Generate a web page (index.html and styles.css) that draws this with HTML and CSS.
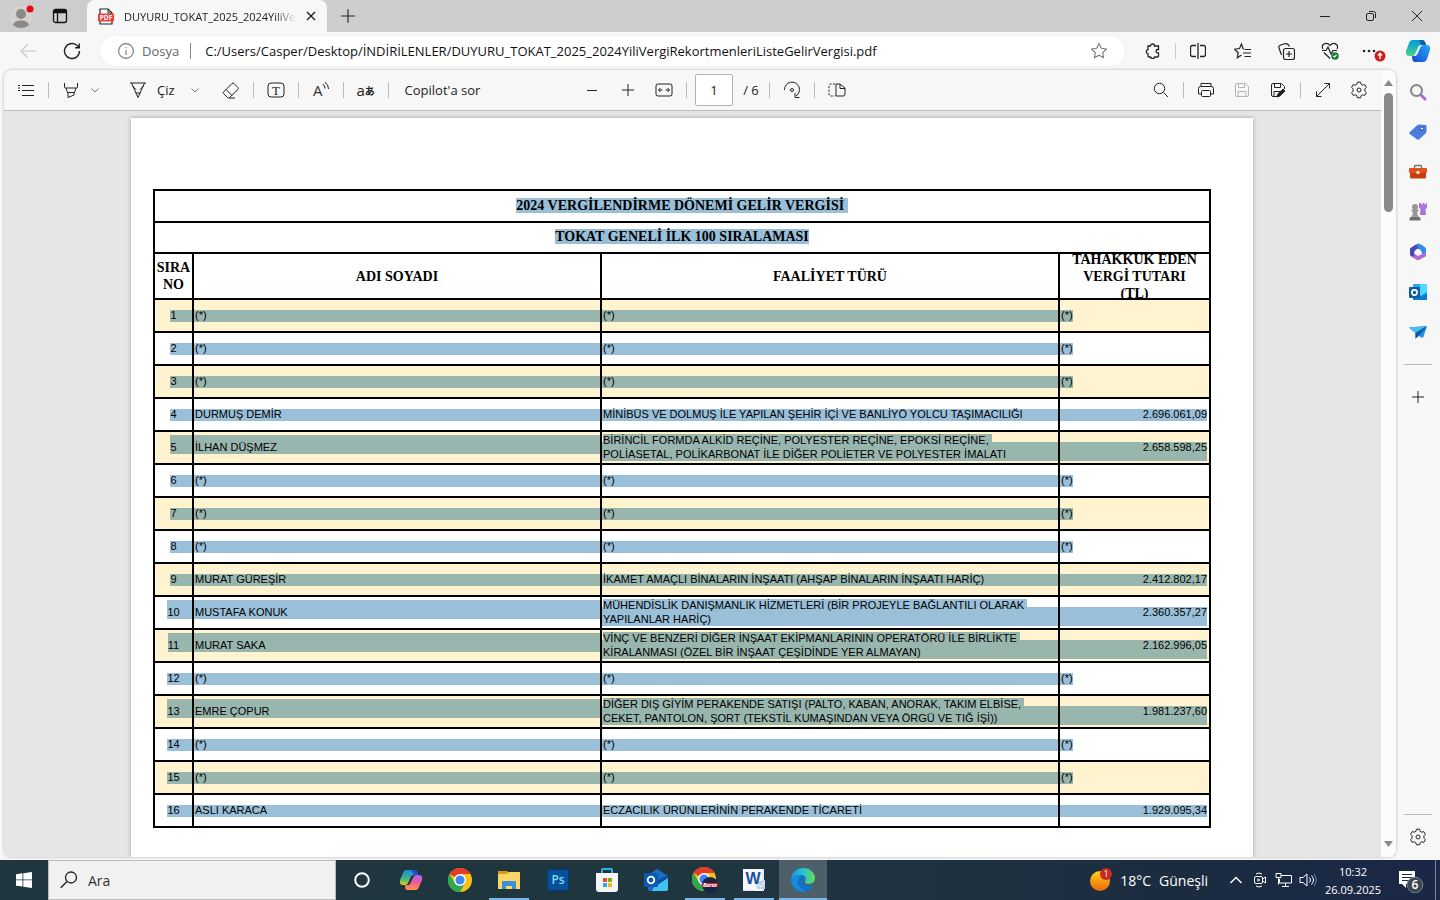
FILE: index.html
```html
<!DOCTYPE html>
<html lang="tr">
<head>
    <meta charset="UTF-8">
    <meta name="viewport" content="width=device-width, initial-scale=1.0">
    <title>DUYURU_TOKAT_2025_2024YiliVergiRekortmenleriListeGelirVergisi.pdf</title>
    <link rel="stylesheet" href="styles.css">
</head>
<body>
    <svg class="defs" aria-hidden="true">
        <symbol id="gear" viewBox="0 0 18 18">
            <path d="M7.4 1.2h3.2l.5 2.1 1.6.9 2.1-.6 1.6 2.7-1.5 1.6v2.2l1.5 1.6-1.6 2.7-2.1-.6-1.6.9-.5 2.1H7.4l-.5-2.1-1.6-.9-2.1.6-1.6-2.7 1.5-1.6V7.9L1.6 6.3l1.6-2.7 2.1.6 1.6-.9z" stroke-linejoin="round"/>
            <circle cx="9" cy="9" r="2"/>
        </symbol>
        <symbol id="chevron" viewBox="0 0 10 10"><path d="M1.5 3.5 5 7l3.5-3.5"/></symbol>
        <symbol id="plus" viewBox="0 0 14 14"><path d="M7 1v12M1 7h12"/></symbol>
        <symbol id="chrome" viewBox="0 0 24 24">
            <circle cx="12" cy="12" r="12" fill="#fbc116"/>
            <path d="M12 12 1.6 6A12 12 0 0 1 22.4 6H12z" fill="#e33b2e"/>
            <path d="M1.6 6A12 12 0 0 0 12 24l5.2-9L12 12 6.8 15z" fill="#2da94f"/>
            <circle cx="12" cy="12" r="6" fill="#fff"/>
            <circle cx="12" cy="12" r="4.6" fill="#4285f4"/>
        </symbol>
    </svg>

    <header class="tabstrip">
        <button class="tab-btn" aria-label="Profil">
            <svg width="26" height="26" viewBox="0 0 26 26"><circle cx="12" cy="14" r="10" fill="#d3d0cc" stroke="#dedbd6"/><circle cx="12" cy="11" r="5" fill="#8d8984"/><path d="M4 22c1-6 15-6 16 0-4 4-12 4-16 0z" fill="#8d8984"/><circle cx="21" cy="6" r="3.5" fill="#e40b15"/></svg>
        </button>
        <button class="tab-btn" aria-label="Sekme eylemleri">
            <svg width="16" height="16" viewBox="0 0 16 16" fill="none" stroke="#111" stroke-width="1.3"><rect x="1.5" y="1.5" width="13" height="13" rx="2"/><path d="M1.5 3.5h13" stroke-width="3.5"/><path d="M5.5 4v10"/></svg>
        </button>
        <div class="tab">
            <svg width="16" height="17" viewBox="0 0 16 17"><path d="M2 1h8l4 4v11H2z" fill="#fff" stroke="#222" stroke-width="1.2"/><path d="M10 1v4h4" fill="none" stroke="#222"/><rect y="5.500" width="16" height="8" rx="1" fill="#f13d3d"/><text x="8" y="12" text-anchor="middle" font-size="6.500" font-weight="700" fill="#fff">PDF</text></svg>
            <span class="tab-title">DUYURU_TOKAT_2025_2024YiliVe</span>
            <button aria-label="Sekmeyi kapat"><svg width="10" height="10" viewBox="0 0 10 10" stroke="#222" stroke-width="1.4"><path d="m1 1 8 8M9 1 1 9"/></svg></button>
        </div>
        <button class="tab-btn" aria-label="Yeni sekme"><svg class="line" width="16" height="16"><use href="#plus"/></svg></button>
        <div class="window-controls">
            <button aria-label="Küçült"><svg class="line" width="12" height="12" viewBox="0 0 12 12"><path d="M1 6.500h10"/></svg></button>
            <button aria-label="Geri yükle"><svg class="line" width="12" height="12" viewBox="0 0 12 12"><rect x="1.500" y="3.500" width="7" height="7" rx="1.500"/><path d="M4 1.500h4.500a2 2 0 0 1 2 2V8"/></svg></button>
            <button aria-label="Kapat"><svg class="line" width="12" height="12" viewBox="0 0 12 12"><path d="m1 1 10 10M11 1 1 11"/></svg></button>
        </div>
    </header>

    <nav class="addressbar">
        <button aria-label="Geri"><svg width="18" height="16" viewBox="0 0 18 16" fill="none" stroke="#c6c6c6" stroke-width="1.200"><path d="M17 8H2M8.500 1.500 2 8l6.500 6.500"/></svg></button>
        <button aria-label="Yenile"><svg class="line" width="18" height="18" viewBox="0 0 18 18" stroke-width="1.400"><path d="M16.500 9A7.500 7.500 0 1 1 13.500 3L16 5.500M16.300 1.500v4.200h-4.200"/></svg></button>
        <div class="pill">
            <svg width="16" height="16" viewBox="0 0 16 16" fill="none" stroke="#777" stroke-width="1.100"><circle cx="8" cy="8" r="7.400"/><path d="M8 7v5M8 4v1.300"/></svg>
            <label for="url">Dosya</label>
            <span class="pill-line"></span>
            <input id="url" type="text" value="C:/Users/Casper/Desktop/İNDİRİLENLER/DUYURU_TOKAT_2025_2024YiliVergiRekortmenleriListeGelirVergisi.pdf">
            <button aria-label="Sık kullanılanlara ekle"><svg width="18" height="18" viewBox="0 0 18 18" fill="none" stroke="#777" stroke-width="1.100" stroke-linejoin="round"><path d="m9 1.500 2.300 4.800 5.200.7-3.800 3.600.9 5.200L9 13.300l-4.600 2.500.9-5.200L1.500 7l5.200-.7z"/></svg></button>
        </div>
        <button aria-label="Uzantılar"><svg class="line" width="16" height="16" viewBox="0 0 16 16" stroke-width="1.300"><path d="M3 3h2.500a2 2 0 0 1 4 0h4v3.500h-.8a1.600 1.600 0 0 0 0 3.300h.8V13q0 1-1 1H9.800a2.200 2.200 0 0 1-4.200 0H4q-1 0-1-1v-2.200a2.200 2.200 0 0 1 0-4.300z"/></svg></button>
        <span class="bar-line"></span>
        <button aria-label="Bölünmüş ekran"><svg class="line" width="16" height="16" viewBox="0 0 16 16" stroke-width="1.300"><path d="M6 2.500H2.500q-2 0-2 2v7q0 2 2 2H6M8 0v16M10 2.500h3.500q2 0 2 2v7q0 2-2 2H10"/></svg></button>
        <button aria-label="Sık kullanılanlar"><svg class="line" width="17" height="16" viewBox="0 0 17 16" stroke-width="1.200"><path d="M10 6 9 5.500 7.500 1 5.500 5.500l-5 .7 3.700 3.500-.9 5L7.500 12M10.500 6.500H17M9 10h8M10.500 13.500H17"/></svg></button>
        <button aria-label="Koleksiyonlar"><svg class="line" width="17" height="17" viewBox="0 0 17 17" stroke-width="1.200"><rect x="5.500" y="5.500" width="11" height="11" rx="2"/><path d="M11 8v6M8 11h6M3.500 12 1 5q-.7-2 1.200-2.700L6.500.8q2-.6 3.500.7l1.500 1.800"/></svg></button>
        <button aria-label="Tarayıcı temel parçaları"><svg class="line" width="18" height="18" viewBox="0 0 18 18" stroke-width="1.200"><path d="M2 7C-1 2 6-.5 9 3.500c3-4 9.500-1.500 7 3.500M1 8.500h4L7 5l3 7 2-3.500h4M3 10.500l6 6"/><circle cx="14" cy="14" r="3.800" fill="#188038" stroke="none"/><path d="m12.300 14 1.200 1 2-2.200" stroke="#fff"/></svg></button>
        <button aria-label="Ayarlar ve diğerleri"><svg width="24" height="22" viewBox="0 0 24 22"><g fill="#222"><circle cx="2" cy="11" r="1.300"/><circle cx="7" cy="11" r="1.300"/><circle cx="12" cy="11" r="1.300"/></g><circle cx="18" cy="16" r="5.500" fill="#c9211e"/><path d="M18 19v-5.500m-2 2 2-2.200 2 2.200" fill="none" stroke="#fff" stroke-width="1.300"/></svg></button>
        <button aria-label="Copilot">
            <svg width="24" height="24" viewBox="0 0 24 24">
                <defs><linearGradient id="cp1" x1="0" y1="0" x2="0" y2="1"><stop offset="0" stop-color="#0099dd"/><stop offset="1" stop-color="#49d58a"/></linearGradient><linearGradient id="cp2" x1="1" y1="0" x2="0" y2="1"><stop offset="0" stop-color="#27a9f5"/><stop offset="1" stop-color="#1648d8"/></linearGradient></defs>
                <path d="M7 1h9q3 0 4 5h-4q-2 0-3 3l-2 5q-1 3-4 3H3q-4 0-3-5l3-8q1-3 4-3z" fill="url(#cp1)"/>
                <path d="M13 1h3q3 0 4 5h-5z" fill="#0a5fa8"/>
                <path d="M17 23H9q-3 0-3-6h3q2 0 3-3l2-5q1-3 4-3h3q4 0 3 5l-3 9q-1 3-4 3z" fill="url(#cp2)"/>
                <path d="M13 6.500h4q-3 0-4 4l-2 4q-1 3-4 2.500 2-1 3-4z" fill="#f2fbff"/>
            </svg>
        </button>
    </nav>

    <div class="workspace">
        <section class="viewer">
            <div class="document">
                <div class="toolbar">
                    <div class="tools tools-left">
                        <button aria-label="İçindekiler"><svg class="line" width="18" height="14" viewBox="0 0 18 14"><path d="M1 2.500h2M5 2.500h12M1 7.500h2M5 7.500h12M5 12.500h12M1 5h2"/></svg></button>
                        <span class="sep"></span>
                        <div class="split">
                            <button aria-label="Vurgula"><svg class="line" width="16" height="17" viewBox="0 0 16 17"><path d="M1.500 1v4q0 1 1 1h11q1 0 1-1V1M3 6l1.500 4.500h7L13 6M5 10.500v5l6-2.500v-2.500"/></svg></button>
                            <button class="arrow" aria-label="Vurgu rengi"><svg class="line" width="10" height="10"><use href="#chevron"/></svg></button>
                        </div>
                        <div class="split draw">
                            <button class="wide"><svg class="line" width="18" height="16" viewBox="0 0 18 16"><path d="M1 1h16M2.500 1 9 15.500 15.500 1M3.500 4q2 1.500 3.500 3.500M14.500 4 11 7.500M6.500 11h5"/></svg>Çiz</button>
                            <button class="arrow" aria-label="Kalem seçenekleri"><svg class="line" width="10" height="10"><use href="#chevron"/></svg></button>
                        </div>
                        <button aria-label="Sil"><svg class="line" width="18" height="17" viewBox="0 0 18 17"><path d="m1.500 10 8.500-8.500q1-1 2 0l4 4q1 1 0 2L7.500 15.500q-1 .8-2 0l-4-4q-.7-.8 0-1.500zM4 7.500l6 6M7 16h6"/></svg></button>
                        <span class="sep"></span>
                        <button aria-label="Metin ekle"><svg class="line" width="18" height="16" viewBox="0 0 18 16"><rect x="1" y="1" width="16" height="14" rx="3"/><text x="9" y="12.500" text-anchor="middle" font-family="Liberation Serif" font-size="13" fill="#222" stroke="none">T</text></svg></button>
                        <span class="sep"></span>
                        <button aria-label="Sesli oku"><svg class="line" width="18" height="18" viewBox="0 0 18 18"><text x="1" y="15" font-size="15" fill="#333" stroke="none">A</text><path d="M11 3q2 2 2 4.500M13 1q3.500 3 3.500 7"/></svg></button>
                        <span class="sep"></span>
                        <button class="translate" aria-label="Çevir">a<small>あ</small></button>
                        <span class="sep"></span>
                        <button class="wide">Copilot'a sor</button>
                    </div>
                    <div class="tools">
                        <button aria-label="Uzaklaştır"><svg class="line" width="14" height="14" viewBox="0 0 14 14"><path d="M2 7.500h10"/></svg></button>
                        <button aria-label="Yakınlaştır"><svg class="line" width="14" height="14"><use href="#plus"/></svg></button>
                        <button aria-label="Genişliğe sığdır"><svg class="line" width="18" height="14" viewBox="0 0 18 14"><rect x="1" y="1" width="16" height="12" rx="2"/><path d="M3.500 7h4M14.500 7h-4M5.500 5l-2 2 2 2M12.500 5l2 2-2 2"/></svg></button>
                        <span class="sep"></span>
                        <input id="page" class="page-input" type="text" value="1">
                        <label class="page-count" for="page">/ 6</label>
                        <span class="sep"></span>
                        <button aria-label="Döndür"><svg class="line" width="18" height="18" viewBox="0 0 18 18"><path d="M1.500 9a7.500 7.500 0 1 1 11.500 6M12 12v4.500h4.500"/><circle cx="9" cy="9" r="1.500"/></svg></button>
                        <span class="sep"></span>
                        <button aria-label="Sayfa görünümü"><svg class="line" width="18" height="14" viewBox="0 0 18 14"><path d="M7 1H3Q1 1 1 3v8q0 2 2 2h4" stroke-dasharray="2 1.500"/><path d="M8 1h4l5 4v6q0 2-2 2H8zM12 1v4.500h5"/></svg></button>
                    </div>
                    <div class="tools tools-right">
                        <button aria-label="Bul"><svg class="line" width="16" height="16" viewBox="0 0 16 16"><circle cx="6.500" cy="6.500" r="5.200"/><path d="m10.500 10.500 4.500 4.500"/></svg></button>
                        <span class="sep"></span>
                        <button aria-label="Yazdır"><svg class="line" width="18" height="16" viewBox="0 0 18 16"><path d="M4 4.500V1.500h10v3M4.500 12H1.500V6.500q0-2 2-2h11q2 0 2 2V12h-3"/><rect x="4.500" y="8.500" width="9" height="6" rx="1"/></svg></button>
                        <button disabled aria-label="Kaydet"><svg width="16" height="16" viewBox="0 0 16 16" fill="none" stroke="#b5b5b5"><path d="M1.500 3q0-1.500 1.500-1.500h8.500l3 3V13q0 1.500-1.500 1.500H3q-1.500 0-1.500-1.500zM4.500 1.500v4h6v-4M4 14.500v-5h8v5"/></svg></button>
                        <button aria-label="Farklı kaydet"><svg class="line" width="16" height="16" viewBox="0 0 16 16"><path d="M7 14.500H3q-1.500 0-1.500-1.500V3q0-1.500 1.500-1.500h8.500l3 3V7M4.500 1.500v4h6v-4M4 14.500v-5h6"/><path d="m7 15 .8-3L13 7l2 2-5.200 5z" fill="#222"/></svg></button>
                        <span class="sep"></span>
                        <button aria-label="Tam ekran"><svg class="line" width="16" height="16" viewBox="0 0 16 16"><path d="M1.500 14.500 14.500 1.500M9.500 1.500h5v5M1.500 9.500v5h5"/></svg></button>
                        <button aria-label="PDF ayarları"><svg class="line" width="18" height="18"><use href="#gear"/></svg></button>
                    </div>
                </div>

                <main class="canvas">
                    <article class="page">
                        <table>
                            <colgroup><col class="c-no"><col class="c-name"><col><col class="c-amount"></colgroup>
                            <thead>
                                <tr class="title"><th colspan="4"><span>2024 VERGİLENDİRME DÖNEMİ GELİR VERGİSİ&nbsp;</span></th></tr>
                                <tr class="subtitle"><th colspan="4"><span>TOKAT GENELİ İLK 100 SIRALAMASI</span></th></tr>
                                <tr class="heads">
                                    <th scope="col"><div>SIRA NO</div></th>
                                    <th scope="col"><div>ADI SOYADI</div></th>
                                    <th scope="col"><div>FAALİYET TÜRÜ</div></th>
                                    <th scope="col"><div>TAHAKKUK EDEN VERGİ TUTARI<br>(TL)</div></th>
                                </tr>
                            </thead>
                            <tbody>
                                <tr><td><div class="no"><span>1</span></div></td><td class="fill">(*)</td><td class="fill">(*)</td><td><span class="mark">(*)</span></td></tr>
                                <tr><td><div class="no"><span>2</span></div></td><td class="fill">(*)</td><td class="fill">(*)</td><td><span class="mark">(*)</span></td></tr>
                                <tr><td><div class="no"><span>3</span></div></td><td class="fill">(*)</td><td class="fill">(*)</td><td><span class="mark">(*)</span></td></tr>
                                <tr><td><div class="no"><span>4</span></div></td><td class="fill">DURMUŞ DEMİR</td><td class="fill">MİNİBÜS VE DOLMUŞ İLE YAPILAN ŞEHİR İÇİ VE BANLİYÖ YOLCU TAŞIMACILIĞI</td><td class="amount"><div>2.696.061,09</div></td></tr>
                                <tr class="tall"><td><div class="no"><span>5</span></div></td><td class="fill">İLHAN DÜŞMEZ</td><td class="fill work"><span>BİRİNCİL FORMDA ALKİD REÇİNE, POLYESTER REÇİNE, EPOKSİ REÇİNE,&nbsp;</span><br>POLİASETAL, POLİKARBONAT İLE DİĞER POLİETER VE POLYESTER İMALATI</td><td class="amount"><div>2.658.598,25</div></td></tr>
                                <tr><td><div class="no"><span>6</span></div></td><td class="fill">(*)</td><td class="fill">(*)</td><td><span class="mark">(*)</span></td></tr>
                                <tr><td><div class="no"><span>7</span></div></td><td class="fill">(*)</td><td class="fill">(*)</td><td><span class="mark">(*)</span></td></tr>
                                <tr><td><div class="no"><span>8</span></div></td><td class="fill">(*)</td><td class="fill">(*)</td><td><span class="mark">(*)</span></td></tr>
                                <tr><td><div class="no"><span>9</span></div></td><td class="fill">MURAT GÜREŞİR</td><td class="fill">İKAMET AMAÇLI BİNALARIN İNŞAATI (AHŞAP BİNALARIN İNŞAATI HARİÇ)</td><td class="amount"><div>2.412.802,17</div></td></tr>
                                <tr class="tall"><td><div class="no"><span>10</span></div></td><td class="fill">MUSTAFA KONUK</td><td class="fill work"><span>MÜHENDİSLİK DANIŞMANLIK HİZMETLERİ (BİR PROJEYLE BAĞLANTILI OLARAK&nbsp;</span><br>YAPILANLAR HARİÇ)</td><td class="amount"><div>2.360.357,27</div></td></tr>
                                <tr class="tall"><td><div class="no"><span>11</span></div></td><td class="fill">MURAT SAKA</td><td class="fill work"><span>VİNÇ VE BENZERİ DİĞER İNŞAAT EKİPMANLARININ OPERATÖRÜ İLE BİRLİKTE&nbsp;</span><br>KİRALANMASI (ÖZEL BİR İNŞAAT ÇEŞİDİNDE YER ALMAYAN)</td><td class="amount"><div>2.162.996,05</div></td></tr>
                                <tr><td><div class="no"><span>12</span></div></td><td class="fill">(*)</td><td class="fill">(*)</td><td><span class="mark">(*)</span></td></tr>
                                <tr class="tall"><td><div class="no"><span>13</span></div></td><td class="fill">EMRE ÇOPUR</td><td class="fill work"><span>DİĞER DIŞ GİYİM PERAKENDE SATIŞI (PALTO, KABAN, ANORAK, TAKIM ELBİSE,&nbsp;</span><br>CEKET, PANTOLON, ŞORT (TEKSTİL KUMAŞINDAN VEYA ÖRGÜ VE TIĞ İŞİ))</td><td class="amount"><div>1.981.237,60</div></td></tr>
                                <tr><td><div class="no"><span>14</span></div></td><td class="fill">(*)</td><td class="fill">(*)</td><td><span class="mark">(*)</span></td></tr>
                                <tr><td><div class="no"><span>15</span></div></td><td class="fill">(*)</td><td class="fill">(*)</td><td><span class="mark">(*)</span></td></tr>
                                <tr><td><div class="no"><span>16</span></div></td><td class="fill">ASLI KARACA</td><td class="fill">ECZACILIK ÜRÜNLERİNİN PERAKENDE TİCARETİ</td><td class="amount"><div>1.929.095,34</div></td></tr>
                            </tbody>
                        </table>
                    </article>
                </main>
            </div>
            <div class="scrollbar">
                <svg width="9" height="6" viewBox="0 0 9 6"><path d="M0 6 4.500 0 9 6z" fill="#8a8a8a"/></svg>
                <div class="thumb"></div>
                <svg class="down" width="9" height="6" viewBox="0 0 9 6"><path d="m0 0 4.500 6L9 0z" fill="#8a8a8a"/></svg>
            </div>
        </section>

        <aside class="sidebar">
            <button aria-label="Ara"><svg width="18" height="18" viewBox="0 0 18 18" fill="none"><circle cx="7.500" cy="7.500" r="5.500" stroke="#858585" stroke-width="2"/><path d="m11.500 11.500 1.500 1.500" stroke="#858585" stroke-width="2"/><path d="m13 13 3 3" stroke="#a66bdc" stroke-width="3" stroke-linecap="round"/></svg></button>
            <button aria-label="Alışveriş"><svg width="18" height="18" viewBox="0 0 18 18"><path d="m.8 9 7.700-7q.5-.5 1.500-.5l6.500.5q1 0 1 1v5.500q0 1-.7 1.700L10.500 16q-1.500 1.500-3 0L.8 11q-1-1 0-2z" fill="#4b7bdc"/><circle cx="13" cy="5.500" r="1.600" fill="#fff" stroke="#28498f"/></svg></button>
            <button aria-label="Araçlar"><svg width="18" height="16" viewBox="0 0 18 16"><path d="M5.500 4V2.500q0-1 1-1h5q1 0 1 1V4" fill="none" stroke="#777" stroke-width="1.500"/><rect y="4" width="18" height="5" rx="1" fill="#e2501c"/><path d="M1 9h16v4q0 1.500-1.500 1.500h-13Q1 14.500 1 13z" fill="#c93c0d"/><circle cx="9" cy="8.500" r="1.800" fill="#ddd"/></svg></button>
            <button aria-label="Oyunlar"><svg width="18" height="18" viewBox="0 0 18 18"><path d="M10 0h2v1.500h1.500V0h2v1.500H17V0h1v5l-1.500 1 .5 6H11l.5-6L10 5z" fill="#a676dc"/><g fill="#969696"><circle cx="6" cy="4" r="3"/><path d="M2.500 6.500h7v2H8l1 5H3l1-5H2.500z"/></g><path d="M.5 17.500V16q0-2.500 3-2.500h5q3 0 3 2.500v1.500z" fill="#707070"/></svg></button>
            <button aria-label="Microsoft 365"><svg width="18" height="18" viewBox="0 0 18 18"><path d="m9 .5 4 1.500 3.500 4-2 5-3-4L8 5 4.500 8.500V13L1 11V5.500z" fill="#6a62d5"/><path d="m9 .5 6 3q2 1 2 3V13l-4 1.500V9L9 5z" fill="#2e8dea"/><path d="M17 9v3q0 1-1 1.700L10 17q-1 .7-2 0l-6-3.500L1 11l4-1 4 3 4-2z" fill="#b36bd4"/><path d="m1 5.500 6-4 2 4-4 3.500v4.500L2 13q-1-1-1-2z" fill="#4c47b8"/><circle cx="9" cy="9" r="3" fill="#f7f7f7"/></svg></button>
            <button aria-label="Outlook"><svg width="18" height="18" viewBox="0 0 18 18"><rect x="4" y="1" width="14" height="16" rx="1" fill="#28a8ea"/><path d="M11 1h7v8l-7 4z" fill="#50d9ff"/><path d="m4 10 7 4 7-4v7H4z" fill="#0f78d4"/><rect y="4" width="11" height="11" rx="1" fill="#0f5ba8"/><circle cx="5.500" cy="9.500" r="2.600" fill="none" stroke="#fff" stroke-width="1.700"/></svg></button>
            <button aria-label="Bırak"><svg width="18" height="16" viewBox="0 0 18 16"><path d="M0 3.500 18 2l-4 12-4.500-2-3 2.500V9z" fill="#1c91e2"/><path d="M0 3.500 18 2 6.500 9z" fill="#48b8f0"/><path d="m6.500 9 11.500-7-8.500 10-3 2.500z" fill="#075b9f"/></svg></button>
            <span class="rule"></span>
            <button aria-label="Özelleştir"><svg class="line" width="14" height="14"><use href="#plus"/></svg></button>
            <span class="rule bottom"></span>
            <button aria-label="Ayarlar"><svg class="line" width="18" height="18"><use href="#gear"/></svg></button>
        </aside>
    </div>

    <footer class="taskbar">
        <button class="start" aria-label="Başlat"><svg width="16" height="16" viewBox="0 0 16 16" fill="#fff"><path d="m0 2.200 6.500-.9v6.200H0zM7.300 1.200 16 0v7.500H7.300zM0 8.300h6.500v6.300L0 13.700zM7.300 8.300H16V16l-8.700-1.200z"/></svg></button>
        <div class="search">
            <svg width="18" height="18" viewBox="0 0 18 18" fill="none" stroke="#222" stroke-width="1.300"><circle cx="11" cy="6.500" r="5.500"/><path d="M7 10.500.8 16.800"/></svg>
            <input type="text" aria-label="Ara" placeholder="Ara">
        </div>
        <div class="apps">
            <button aria-label="Cortana"><svg width="18" height="18" viewBox="0 0 18 18"><circle cx="9" cy="9" r="6.800" fill="none" stroke="#fff" stroke-width="2"/></svg></button>
            <button aria-label="Copilot">
                <svg width="24" height="24" viewBox="0 0 24 24">
                    <defs><linearGradient id="tk1" x1="0" y1="0" x2="0" y2="1"><stop offset="0" stop-color="#168ce8"/><stop offset=".6" stop-color="#45b87a"/><stop offset="1" stop-color="#f3c61c"/></linearGradient><linearGradient id="tk2" x1="0" y1="0" x2="0" y2="1"><stop offset="0" stop-color="#a963f3"/><stop offset=".5" stop-color="#ef5a9d"/><stop offset="1" stop-color="#ff9646"/></linearGradient></defs>
                    <path d="M7 2h9q2 0 3 5h-4q-2 0-3 3l-2 4q-1 3-4 3H4q-4 0-3-5l3-7q1-3 3-3z" fill="url(#tk1)"/>
                    <path d="M12 2h4q2 0 3 5h-4z" fill="#1f4fd0"/>
                    <path d="M17 22H8q-2 0-2-5h3q2 0 3-3l2-4q1-3 4-3h2q4 0 3 5l-3 7q-1 3-3 3z" fill="url(#tk2)"/>
                    <path d="m12 8 2-1-4 10-3 0q2-1 3-4z" fill="#20363f"/>
                </svg>
            </button>
            <button aria-label="Google Chrome"><svg width="24" height="24"><use href="#chrome"/></svg></button>
            <button class="open" aria-label="Dosya Gezgini"><svg width="22" height="20" viewBox="0 0 22 20"><path d="M0 1h9l2 2h11v15H0z" fill="#d99d14"/><path d="M0 4h9l2-2h11v17H0z" fill="#fcd667"/><path d="M4 19v-7q0-1 1-1h12q1 0 1 1v7h-4v-3H8v3z" fill="#3d8fd6"/></svg></button>
            <button aria-label="Photoshop"><svg width="22" height="22" viewBox="0 0 22 22"><rect x=".5" y=".5" width="21" height="21" rx="1" fill="#07519b" stroke="#043a73"/><text x="11" y="15" text-anchor="middle" font-size="12" font-weight="600" fill="#7fdcfb">Ps</text></svg></button>
            <button aria-label="Microsoft Store"><svg width="24" height="24" viewBox="0 0 24 24"><path d="M7 6V2q0-1 1-1h8q1 0 1 1v4" fill="none" stroke="#2cb1ec" stroke-width="2"/><path d="M1 5h22v16q0 3-3 3H4q-3 0-3-3z" fill="#f5f5f5"/><path d="M8 10h4v4H8z" fill="#e84e24"/><path d="M13 10h4v4h-4z" fill="#74b217"/><path d="M8 15h4v4H8z" fill="#2aa4ea"/><path d="M13 15h4v4h-4z" fill="#f9b713"/></svg></button>
            <button aria-label="Outlook"><svg width="24" height="24" viewBox="0 0 24 24"><path d="m4 7 9-6 11 7v13q0 2-2 2H6q-2 0-2-2z" fill="#1670c5"/><path d="m13 12 11-4v13q0 2-2 2H8z" fill="#40c4f5"/><path d="m13 12 11-5v3L9 20z" fill="#0b4f9e"/><rect y="5" width="14" height="14" rx="1" fill="#0a5ab5"/><circle cx="7" cy="12" r="3.300" fill="none" stroke="#fff" stroke-width="1.800"/></svg></button>
            <button class="open" aria-label="Google Chrome - Profil"><svg width="26" height="26" viewBox="0 0 26 26"><use href="#chrome" width="24" height="24"/><circle cx="18" cy="18" r="8" fill="#172549"/><path d="M10 16h15.700q.5 2 0 4H10z" fill="#d3202b"/><text x="18" y="20" text-anchor="middle" font-size="5" font-weight="700" font-style="italic" fill="#fff">Bursa</text></svg></button>
            <button class="open" aria-label="Word"><svg width="22" height="22" viewBox="0 0 22 22"><path d="M0 0h21v22H0z" fill="#dce8f8"/><path d="M0 0h19v22L0 20z" fill="#f5f9fe"/><path d="m13 13 9-2v9h-8z" fill="#bbd0ed"/><path d="m13 14 5 4 4-6" fill="none" stroke="#fff"/><text x="10" y="15" text-anchor="middle" font-family="Liberation Sans" font-size="16" font-weight="700" fill="#174f9f">W</text></svg></button>
            <button class="open active" aria-label="Microsoft Edge">
                <svg width="24" height="24" viewBox="0 0 24 24">
                    <defs><linearGradient id="ed1"><stop offset="0" stop-color="#1797dd"/><stop offset=".5" stop-color="#2ac1d0"/><stop offset="1" stop-color="#62df55"/></linearGradient></defs>
                    <path d="M0 12C0 5 5 0 12 0s12 5 12 10c0 4-3 6-6 6l4 3c-2 3-6 5-10 5C5 24 0 19 0 12z" fill="#146fc7"/>
                    <path d="M0 11C1 4 6 0 12 0c7 0 12 5 12 10 0 4-3 6-6 6-4 0-5-1.500-4-3 2-4-1-6-4-6-5 0-8 2-10 4z" fill="url(#ed1)"/>
                    <path d="M10 8c-5 3-4 13 5 15.500C8 25 1 20 0 13c0-4 6-7 10-5z" fill="#168ddb"/>
                    <path d="M14 13c-1 1.500 0 3 4 3 2 0 4-.7 5-1.700-.5 2-1.500 3.200-2.200 3.700-5 1-10-2-8.800-6 .5-1 1-1.500 1.500-1.300.8.300 1 1.300.5 2.300z" fill="#4d5f69"/>
                </svg>
            </button>
        </div>
        <div class="tray">
            <button class="weather"><svg width="24" height="24" viewBox="0 0 24 24"><defs><linearGradient id="sun" x1="0" y1="0" x2="0" y2="1"><stop offset="0" stop-color="#ffd119"/><stop offset="1" stop-color="#f0650c"/></linearGradient></defs><circle cx="12" cy="13" r="10" fill="url(#sun)"/><circle cx="18" cy="6" r="6" fill="#c72a1e"/><text x="18" y="9" text-anchor="middle" font-size="9" fill="#fff">1</text></svg><span>18°C</span><span>Güneşli</span></button>
            <button aria-label="Gizli simgeler"><svg class="light" width="14" height="10" viewBox="0 0 14 10"><path d="m1.500 8 5.500-5.500L12.500 8" stroke-width="1.400"/></svg></button>
            <button aria-label="Toplantı"><svg class="light" width="14" height="18" viewBox="0 0 14 18"><rect x="1.500" y="5.500" width="8" height="7" rx="1.500"/><path d="M9.500 8 12.500 6v6l-3-2M3 3q3-2 6 0M3 15q3 2 6 0"/><circle cx="5.500" cy="9" r="1"/></svg></button>
            <button aria-label="Ağ"><svg class="light" width="18" height="16" viewBox="0 0 18 16"><path d="M6 3.500h10.500v7.500h-12V7M10.500 11v3M7 14.500h7M1 1.500h5v4H1zM3.500 5.500v7"/></svg></button>
            <button aria-label="Ses"><svg class="light" width="18" height="16" viewBox="0 0 18 16"><path d="M1 5.500h3L8 2v12l-4-3.500H1zM10.500 5.500q2 2.500 0 5M12.500 3.500q4 4.500 0 9"/><path d="M15 2q4.500 6 0 12" stroke="#71809a"/></svg></button>
            <button class="clock"><time>10:32</time><time>26.09.2025</time></button>
            <button class="notify" aria-label="Bildirimler"><svg width="26" height="26" viewBox="0 0 26 26"><path d="M1 4h16v13H8v4l-4-4H1z" fill="#fff"/><path d="M4 7.500h10M4 10.500h10M4 13.500h7" stroke="#1b2c45"/><circle cx="17" cy="18" r="7.800" fill="#3c4550" stroke="#737b86"/><text x="17" y="22" text-anchor="middle" font-size="12" font-weight="600" fill="#fff">6</text></svg></button>
        </div>
    </footer>
</body>
</html>
```
FILE: styles.css
```css
* {
    box-sizing: border-box;
}

body {
    display: flex;
    flex-direction: column;
    height: 100vh;
    margin: 0;
    overflow: hidden;
    background-color: #f7f7f7;
    color: #222;
    font-family: "Open Sans", "Noto Sans", sans-serif;
    font-size: 13px;
}

button {
    display: flex;
    align-items: center;
    justify-content: center;
    flex-shrink: 0;
    padding: 0;
    border: none;
    background: none;
    color: inherit;
    font: inherit;
    cursor: pointer;
}

input {
    border: none;
    outline: none;
    background: none;
    color: inherit;
    font: inherit;
}

svg {
    display: block;
    flex-shrink: 0;
}

.defs {
    display: none;
}

.line {
    fill: none;
    stroke: #222;
}

.light {
    fill: none;
    stroke: #fff;
}

/* Sekmeler */
.tabstrip {
    display: flex;
    flex: 0 0 32px;
    padding-left: 3px;
    background-color: #cdcdcd;
}

.tab-btn {
    width: 38px;
}

.tab {
    display: flex;
    align-items: center;
    gap: 10px;
    width: 240px;
    margin: 0 2px 0 8px;
    padding: 0 11px;
    border-radius: 8px 8px 0 0;
    background-color: #f7f7f7;
    font-size: 11px;
}

.tab-title {
    flex: 1;
    min-width: 0;
    white-space: nowrap;
    -webkit-mask-image: linear-gradient(to right, #000 88%, transparent);
    mask-image: linear-gradient(to right, #000 88%, transparent);
}

.window-controls {
    display: flex;
    margin-left: auto;
}

.window-controls button {
    width: 46px;
}

/* Adres çubuğu */
.addressbar {
    display: flex;
    align-items: center;
    flex: 0 0 38px;
    padding-left: 6px;
}

.addressbar > button {
    width: 44px;
    height: 32px;
}

.pill {
    display: flex;
    align-items: center;
    flex: 1;
    height: 30px;
    margin: 0 6px;
    padding: 0 17px 0 18px;
    border-radius: 15px;
    background-color: #fff;
    box-shadow: 0 0 2px rgba(0, 0, 0, 0.08);
}

.pill label {
    margin-left: 8px;
    color: #666;
}

.pill-line {
    width: 1px;
    height: 16px;
    margin: 0 14px 0 11px;
    background-color: #888;
}

.pill input {
    flex: 1;
    padding: 0;
    color: #111;
}

.bar-line {
    width: 1px;
    height: 16px;
    background-color: #ccc;
}

/* PDF görüntüleyici */
.workspace {
    display: flex;
    flex: 1;
    min-height: 0;
    padding: 0 0 3px 4px;
}

.viewer {
    display: flex;
    flex: 1;
    min-width: 0;
    overflow: hidden;
    border-radius: 8px;
    box-shadow: 0 0 3px rgba(0, 0, 0, 0.3);
}

.document {
    display: flex;
    flex-direction: column;
    flex: 1;
    min-width: 0;
}

.toolbar {
    display: flex;
    flex: 0 0 41px;
    padding: 0 8px;
    border-bottom: 1px solid #bdbdbd;
    background-color: #f7f7f7;
}

.tools {
    display: flex;
    align-items: center;
    gap: 8px;
}

.tools-left {
    width: 566px;
}

.tools-right {
    margin-left: auto;
}

.tools button {
    width: 28px;
    height: 32px;
}

.tools .wide {
    gap: 10px;
    width: auto;
    padding-left: 8px;
}

.tools .arrow {
    width: 20px;
}

.arrow .line {
    stroke: #777;
}

.split {
    display: flex;
}

.draw {
    gap: 10px;
    padding: 0 4px 0 8px;
}

.translate {
    font-size: 15px;
}

.translate small {
    font-family: "Noto Sans CJK JP", sans-serif;
    font-size: 10px;
    font-weight: bold;
}

.sep {
    width: 1px;
    height: 16px;
    background-color: #bbb;
}

.page-input {
    width: 38px;
    height: 32px;
    border: 1px solid #b3b3b3;
    border-radius: 2px;
    background-color: #fff;
    text-align: center;
}

.page-count {
    width: 20px;
    text-align: center;
    white-space: nowrap;
}

.canvas {
    flex: 1;
    min-height: 0;
    overflow: hidden;
    padding: 7px 128px 0 127px;
    background-color: #e6e6e6;
}

.page {
    height: 100%;
    padding: 71px 42px 0 22px;
    background-color: #fff;
    box-shadow: 0 0 4px rgba(0, 0, 0, 0.3);
}

.scrollbar {
    display: flex;
    flex-direction: column;
    align-items: center;
    width: 15px;
    padding: 10px 0;
    background-color: #fcfcfc;
}

.thumb {
    width: 9px;
    height: 119px;
    margin-top: 7px;
    border-radius: 5px;
    background-color: #8a8a8a;
}

.scrollbar .down {
    margin-top: auto;
}

/* Tablo */
table {
    width: 100%;
    border-collapse: collapse;
    table-layout: fixed;
    color: #000;
    font-family: "Liberation Sans", Arial, sans-serif;
    font-size: 11px;
}

.c-no {
    width: 39px;
}

.c-name {
    width: 408px;
}

.c-amount {
    width: 151px;
}

th,
td {
    padding: 0;
    border: 2px solid #000;
}

th {
    font-family: "Liberation Serif", "Times New Roman", serif;
    font-size: 14px;
    line-height: 17px;
}

.title {
    height: 32px;
}

.subtitle {
    height: 31px;
}

.title th,
.subtitle th {
    padding-bottom: 2px;
}

.title span,
.subtitle span {
    background-color: #99bfd9;
}

.heads div {
    display: flex;
    align-items: center;
    justify-content: center;
    height: 44px;
    overflow: hidden;
}

/* Seçili metin satırın ortasında bir şerit olarak görünür */
tbody tr {
    --sel: #99bfd9;
    --band: 10px / 100% 12px;
    --work-band: 10px / 100% 12px;
    height: 33px;
}

tbody tr:nth-child(odd) {
    --sel: #99b6ae;
    background-color: #fff4cf;
}

tbody .tall {
    --band: 3px / 100% 19px;
    --work-band: 10px / 100% 19px;
}

.no {
    display: grid;
    grid-template-columns: 1fr auto 1fr;
    line-height: 31px;
}

.no::before,
.no::after {
    content: "";
}

.no span,
.no::after,
.mark,
.fill {
    background: linear-gradient(var(--sel), var(--sel)) no-repeat 0 var(--band);
}

.fill {
    padding: 0 0 2px 1px;
}

.mark {
    display: inline-block;
    padding-left: 1px;
    line-height: 31px;
    vertical-align: top;
}

.amount div {
    margin-right: 2px;
    background: linear-gradient(var(--sel), var(--sel)) no-repeat 0 var(--work-band);
    line-height: 31px;
    text-align: right;
}

.work {
    background: linear-gradient(var(--sel), var(--sel)) no-repeat 0 var(--work-band);
    line-height: 14px;
    white-space: nowrap;
}

.work span {
    background-color: var(--sel);
}

/* Kenar çubuğu */
.sidebar {
    display: flex;
    flex-direction: column;
    align-items: center;
    width: 44px;
    padding-top: 2px;
}

.sidebar button {
    width: 40px;
    height: 40px;
}

.rule {
    width: 28px;
    height: 1px;
    margin: 12px 0;
    background-color: #bbb;
}

.bottom {
    margin: auto 0 2px;
}

/* Görev çubuğu */
.taskbar {
    display: flex;
    flex: 0 0 40px;
    background: linear-gradient(to right, #20363f 0%, #20363f 50%, #1b2b41 85%, #1a2747 100%);
    color: #fff;
    font-size: 14px;
}

.start {
    width: 48px;
}

.search {
    display: flex;
    align-items: center;
    gap: 10px;
    width: 288px;
    padding: 0 11px;
    border: 1px solid #bbb;
    background-color: #f1f1f1;
}

.search input {
    flex: 1;
    min-width: 0;
    padding: 0;
}

.search input::placeholder {
    color: #333;
}

.apps {
    display: flex;
    gap: 1px;
    padding-left: 2px;
}

.apps button {
    width: 48px;
    height: 40px;
    background: no-repeat center bottom / 40px 2px;
}

.apps .open {
    background-image: linear-gradient(#76b9ed, #76b9ed);
}

.apps .active {
    background-color: #4d5f69;
    background-size: 100% 2px;
}

.tray {
    display: flex;
    margin-left: auto;
    padding-right: 4px;
    font-size: 11px;
}

.tray button {
    width: 24px;
}

.tray .weather {
    gap: 8px;
    width: auto;
    margin-right: 16px;
    font-size: 14px;
}

.tray .clock {
    flex-direction: column;
    gap: 1px;
    width: 66px;
    line-height: 17px;
}

.tray .notify {
    width: 50px;
    border-right: 1px solid #7b869a;
}
```
